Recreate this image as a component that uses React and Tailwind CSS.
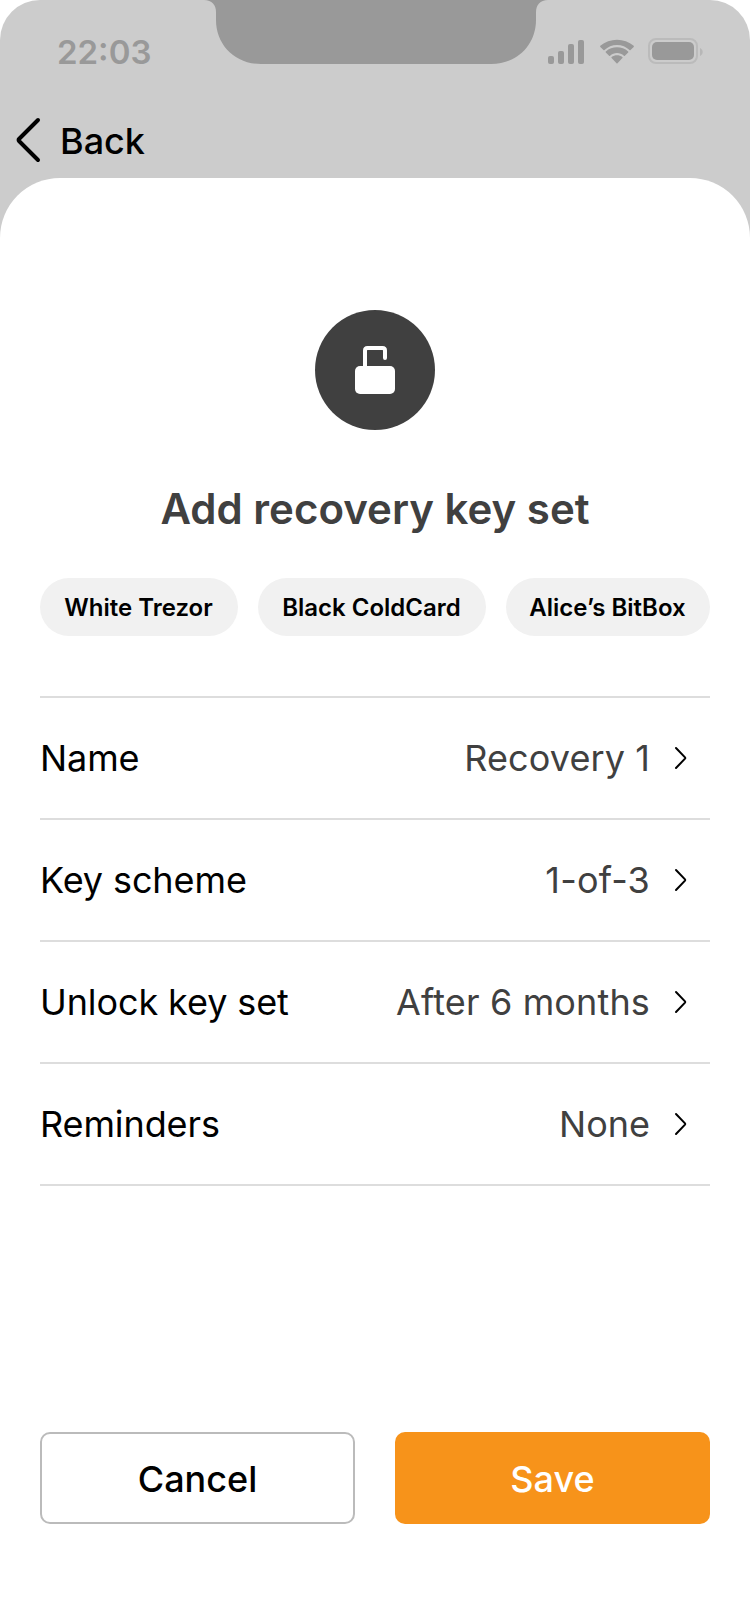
import React from "react";

const KEYS = [
  { label: "White Trezor", width: "w-[198px]" },
  { label: "Black ColdCard", width: "w-[228px]" },
  { label: "Alice’s BitBox", width: "w-[204px]" },
];

const SETTINGS = [
  { label: "Name", value: "Recovery 1", tracking: "tracking-[0.1px]" },
  { label: "Key scheme", value: "1-of-3", tracking: "tracking-[0.2px]" },
  { label: "Unlock key set", value: "After 6 months", tracking: "tracking-[0.15px]" },
  { label: "Reminders", value: "None", tracking: "" },
];

function StatusBar() {
  return (
    <div className="flex h-[100px] items-start">
      <div className="w-[204px] pt-8 pl-[57px] text-[33px] leading-10 font-semibold text-[#999]">
        22:03
      </div>
      <svg className="h-16 w-[344px] shrink-0" viewBox="0 0 344 64" fill="#999">
        <path d="M0 0C8 0 12 5 12 12V20C12 44 30 64 57 64H287C314 64 332 44 332 20V12C332 5 336 0 344 0Z" />
      </svg>
      <svg className="h-[72px] w-[160px] shrink-0" viewBox="0 0 160 72" fill="#999">
        <rect x="0" y="56" width="6" height="8" rx="2" />
        <rect x="10" y="51" width="6" height="13" rx="2" />
        <rect x="20" y="44" width="6" height="20" rx="2" />
        <rect x="30" y="40" width="6" height="24" rx="2" />
        <g transform="translate(52 40)">
          <path d="M17 5C21.8 5 26.2 6.9 29.5 10.1C29.8 10.4 30.2 10.4 30.5 10.1L33.7 6.9C34 6.6 34 6.1 33.7 5.8C24.4 -2.2 9.6 -2.2 0.3 5.8C0 6.1 0 6.6 0.3 6.9L3.5 10.1C3.8 10.4 4.2 10.4 4.5 10.1C7.8 6.9 12.2 5 17 5Z" />
          <path d="M17 13C19.6 13 22 14 23.9 15.7C24.2 16 24.6 16 24.9 15.7L28.2 12.5C28.5 12.2 28.5 11.7 28.2 11.4C21.9 5.8 12.1 5.8 5.8 11.4C5.5 11.7 5.5 12.2 5.8 12.5L9.1 15.7C9.4 16 9.8 16 10.1 15.7C12 14 14.4 13 17 13Z" />
          <path d="M22.4 18.1C22.7 17.8 22.7 17.4 22.4 17.1C19.3 14.7 14.7 14.7 11.6 17.1C11.3 17.4 11.3 17.8 11.6 18.1L16.5 23.3C16.8 23.6 17.2 23.6 17.5 23.3Z" />
        </g>
        <rect x="101" y="39" width="48" height="24" rx="7" fill="none" stroke="#bbb" strokeWidth="2" />
        <rect x="104" y="42" width="42" height="18" rx="5" />
        <path d="M152 48C155.600 49.500 155.600 54.500 152 56Z" fill="#b7b7b7" />
      </svg>
    </div>
  );
}

function Header() {
  return (
    <div className="flex h-[78px] items-start gap-[18px] pt-4 pl-4">
      <svg className="h-12 w-[26px]" viewBox="0 0 26 48" fill="none" stroke="#000" strokeWidth="4" strokeLinecap="round" strokeLinejoin="round">
        <path d="M22 4L3 23a1.400 1.400 0 0 0 0 2L22 44" />
      </svg>
      <span className="pt-[3px] text-[36px] leading-[44px] font-medium">Back</span>
    </div>
  );
}

function UnlockedBadge() {
  return (
    <div className="flex size-[120px] items-center justify-center rounded-full bg-[#404040]">
      <svg className="size-12" viewBox="0 0 48 48">
        <path d="M14 22V4.500Q14 2 16.500 2H31.500Q34 2 34 4.500V12" fill="none" stroke="#fff" strokeWidth="4" strokeLinecap="round" />
        <rect x="4" y="20" width="40" height="28" rx="5" fill="#fff" />
      </svg>
    </div>
  );
}

function SettingRow({ label, value, tracking }) {
  return (
    <div className="flex h-[122px] items-center border-t-2 border-[#ddd]">
      <span className="text-[36px] leading-[44px] tracking-[-0.1px]">{label}</span>
      <span className={`ml-auto text-[36px] leading-[44px] text-[#404040] ${tracking}`}>{value}</span>
      <svg className="mr-5 ml-5 h-6 w-5" viewBox="0 0 20 24" fill="none" stroke="#000" strokeWidth="2" strokeLinecap="round" strokeLinejoin="round">
        <path d="M6 2L15 11.400a0.900 0.900 0 0 1 0 1.200L6 22" />
      </svg>
    </div>
  );
}

export default function App() {
  return (
    <div className="h-[1624px] w-[750px] overflow-hidden bg-white font-['Inter',sans-serif] text-black">
      <div className="flex h-full flex-col rounded-t-[40px] bg-[#ccc]">
        <StatusBar />
        <Header />
        <main className="flex grow flex-col items-center rounded-t-[60px] bg-white px-10 pt-[132px]">
          <UnlockedBadge />
          <h1 className="mt-[54px] text-[42px] leading-[50px] font-semibold text-[#404040]">
            Add recovery key set
          </h1>
          <div className="mt-[44px] flex gap-5">
            {KEYS.map((key) => (
              <span
                key={key.label}
                className={`flex h-[58px] items-center justify-center rounded-full bg-[#f1f1f1] pt-0.5 pr-px text-[24px] leading-[30px] font-semibold whitespace-nowrap ${key.width}`}
              >
                {key.label}
              </span>
            ))}
          </div>
          <div className="mt-[60px] w-full border-b-2 border-[#ddd]">
            {SETTINGS.map((item) => (
              <SettingRow key={item.label} {...item} />
            ))}
          </div>
          <div className="mt-auto mb-[100px] grid w-full grid-cols-2 gap-10 text-[36px] leading-[44px] font-medium">
            <button className="h-[92px] rounded-[10px] border-2 border-[#bbb] pt-0.5">Cancel</button>
            <button className="h-[92px] rounded-[10px] bg-[#f7931a] pt-0.5 text-white">Save</button>
          </div>
        </main>
      </div>
    </div>
  );
}
